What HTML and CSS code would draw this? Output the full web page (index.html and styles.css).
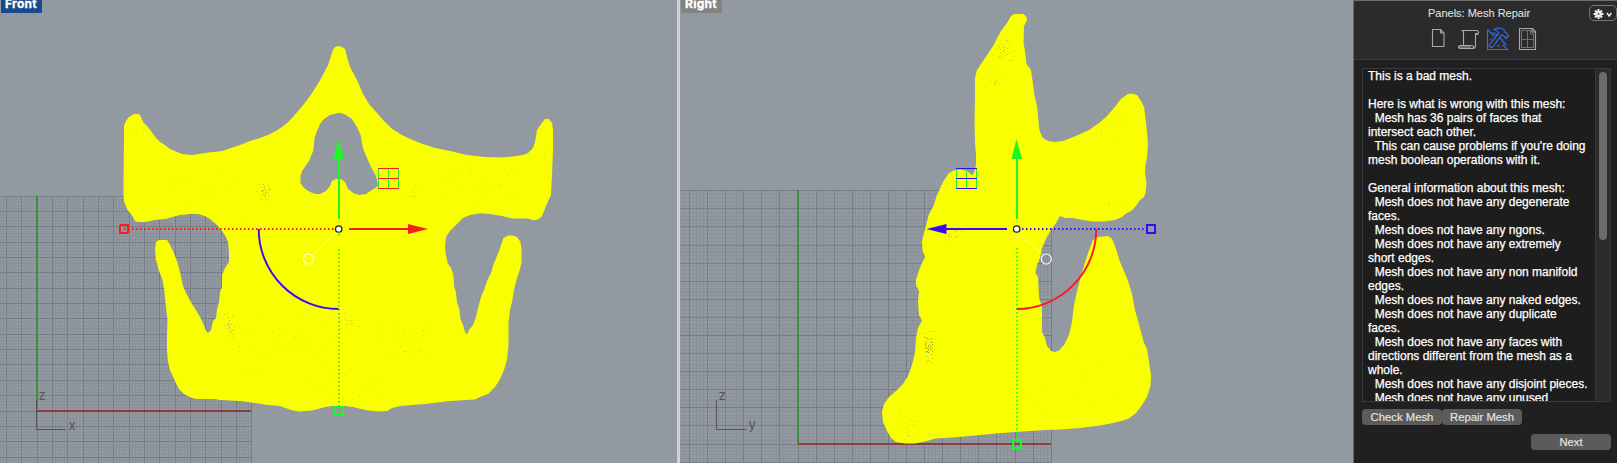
FILE: index.html
```
<!DOCTYPE html>
<html lang="en">
<head>
<meta charset="utf-8">
<title>Mesh Repair</title>
<link rel="stylesheet" href="styles.css">
</head>
<body>
<main class="app">
  <section class="viewport">
    <svg class="scene" viewBox="0 0 677 463">
      <g id="grid-front"></g>
      <path class="mesh" fill-rule="evenodd" d="M338 46L335 47 333 50 331 56 328 65 324 73 319 82 310 96 304 104 298 111 293 117 287 123 282 127 276 131 268 135 260 138 250 141 240 145 231 148 222 151 205 153 192 155 182 154 177 152 170 149 165 145 160 142 156 138 151 131 147 126 143 122 140 115 138 114H134L129 117 126 121 124 126V140L123.500 178V195L124 201 127 209 130 213 133 217 135 221 138 222 145 222 155 220 165 219 180 215 190 214 198 214 205 216 210 219 217 225 222 231 226 237 228 242 229 252V262L225 268 222 275V287L220 292 219 302 217 310 216 318 213 321 211 330 208 333 206 331 203 323 199 315 192 304 186 293 183 286 180 272 177 261 173 251 169 243 167 240H159L156 242 155 250 156 260 159 271 162 278 164 288 166 307 167.500 320 167 335V350L168 362 170 370 174 379 179 389 184 394 188 396 192 398 197 399H215L220 400 240 401 255 403 268 405 280 406 291 410 299 411.500 312 410.500 318 409 325 407 332 406H345L353 407 365 410 378 411.500 387 411 392 408 400 406 425 404 450 401 475 399.500 480 397 488 394 495 387 500 379 504 370 507 360 508.500 345V323L510 310 512 302 514 290 517 278 520 269 521.500 262V250L520.500 242 517 237 513 235.500H508L503.500 238 501 245 499 251 494 263 491 273 487 281 484 290 481 297 478 308 476 317 473 325 469 330 467 334.500 465 332 463 325 460.500 319 459.500 310 457 302 456 293 454 286 454 281 453 274 451 268 447.500 263 446 255 445 247 446 237 450 231 457 224 463 218 470 215 480 213.300 490 214 502 216 512 218.500H528L534 220.500 539 219 542 216 546 206 551 195 552 175 553 150V130L552 123 549 119H545L541 124 537 130 535 142 533 148 528 153 523 155 512 156.500 500 157.500 485 157 467 155 450 151 435 148 420 143 408 138 400 134 391 128 383 120 377 113 369 104 363 94 357 80 350 67 347 57 345 49 342 47ZM338 113L330 115 324 119 320 124 317 131 314.500 138 313.500 150 309 161 302 171 300.500 176V183L303 187 308 191 315 194H320L326 191 330 186 332 181 336 179H341L345 182 348 189 354 193.500 359 195 366 194 372 190 377 187 378 184 376 176 371 167 367 158 364 151 362 144 361 136 357 127 352 119 346 115 341 113Z"/>
      <g class="speckles" id="speckles-front"></g>
      <g class="corner-axes"><path d="M36.500 399.500V429.500H66"/><text x="38.500" y="399.500">z</text><text x="68.500" y="429.500">x</text></g>
      <path class="dots red" d="M124 229H334"/>
      <path class="dots green" d="M339 249V406"/>
      <path class="dots green" d="M339 234V236"/>
      <path class="dots pale" d="M336 232L312 256"/>
      <path class="arc blue" d="M258.700 229A80 80 0 0 0 338.500 309"/>
      <path class="shaft green" d="M339 219V158"/><path class="fill-green" d="M338.500 139l-5 20h10.500z"/>
      <path class="shaft red" d="M348.500 229H409"/><path class="fill-red" d="M428 229l-20-5v10z"/>
      <g class="plane"><path class="green" d="M378.500 168V189M388.500 168V189M398.500 168V189"/><path class="red" d="M378 168.500H399M378 178.500H399M378 188.500H399"/></g>
      <circle class="pivot" cx="338.700" cy="229" r="3.200"/>
      <circle class="rotate-handle" cx="308.500" cy="259" r="5"/>
      <rect class="handle red" x="120" y="225" width="8" height="8" rx="1"/>
      <rect class="handle green" x="335" y="407" width="8" height="8"/>
    </svg>
    <h2 class="viewport-title active">Front</h2>
  </section>
  <section class="viewport">
    <svg class="scene" viewBox="680 0 673 463">
      <g id="grid-right"></g>
      <path class="mesh" d="M1014 14H1023L1026 16 1027 20 1024 26 1023.500 42 1025.500 55 1026.500 64 1031 70 1033 84 1034.500 95 1037.500 109 1039 127 1040 132 1043 138 1048 141 1055 142 1063 141 1071 138 1078 135 1089 130 1099 123 1107 116 1114 108 1121 99 1127 94.500 1131 93.500 1137 95 1141 101 1144 107 1145.500 118 1147 132 1148 145 1147 157 1145.500 165 1145 173 1146.500 183 1145.500 193 1144 197 1140 200 1136 206 1131 211 1126 213.500 1122 217 1115 220 1103 221.500H1093L1080 219.500 1073 218H1065L1060 216 1056 223 1051 230 1047 237 1042 248 1040 258 1037 265 1035.500 273 1038 277 1039 298 1042 306V332L1045 338 1047 346 1051 351 1055 352 1059 350.500 1064 345 1069 335 1072 322 1074 305 1077 291 1082 272 1088 253 1093 240 1097 237 1108 236 1112 239 1115 246 1120 262 1127 278 1132 294 1135 310 1140 328 1144 343 1147 349 1149 362 1151 376 1150.500 386 1147 397 1142 405 1136 413 1128 419 1123 420.500 1113 423 1100 425.500 1080 428 1060 429.500 1045 430 1030 431 1015 432 990 434 970 436 952 437.500 935 438.500 927 441 915 443.500H905L896 442 891 438 887 431 883 422 882 412 884 404 889 397 896 391 903 384 908 376 912 365 915 352 916 338 918 328 922 320.500 919 315 918 302 919 291 916 285V280L919 270 922 263 925 257 922.500 250 922 241 924 233 926 225 929 214 933 207 937 195 943 182 949 173 954 170.500 960 169.500 967 171 972.500 175.500 975 170 976 164V155L975 143 974.500 120 975 101V78L977 70 985 58 993 46 1001 31 1007 23 1011 16Z"/>
      <g class="speckles" id="speckles-right"></g>
      <g class="corner-axes"><path d="M716.500 399.500V429.500H746"/><text x="718.500" y="399.500">z</text><text x="748.500" y="428.500">y</text></g>
      <path class="dots blue" d="M1022 229H1147"/>
      <path class="dots green" d="M1017 248V438"/>
      <path class="dots pale" d="M1018 232L1042 254"/>
      <path class="arc red" d="M1096.300 229A80 80 0 0 1 1016.700 309"/>
      <path class="shaft green" d="M1017 219V158"/><path class="fill-green" d="M1016.500 139l-5 20h10.500z"/>
      <path class="shaft blue" d="M1007 229H946"/><path class="fill-blue" d="M926.500 229l20-5v10z"/>
      <g class="plane"><path class="green" d="M956.500 168V189M966.500 168V189M976.500 168V189"/><path class="blue" d="M956 168.500H977M956 178.500H977M956 188.500H977"/></g>
      <circle class="pivot" cx="1016.700" cy="229" r="3.200"/>
      <circle class="rotate-handle" cx="1046.300" cy="259" r="5"/>
      <rect class="handle blue" x="1147" y="225" width="8" height="8"/>
      <rect class="handle green" x="1013" y="440" width="8" height="8"/>
    </svg>
    <h2 class="viewport-title">Right</h2>
  </section>
  <aside class="panel">
    <header class="panel-head">
      <h1 class="panel-title">Panels: Mesh Repair</h1>
      <button class="gear" aria-label="Panel options">
        <svg width="22" height="12" viewBox="0 0 22 12"><g stroke="#eee" stroke-width="2"><path d="M6.500 1V11M1.500 6H11.500M3 2.500L10 9.500M10 2.500L3 9.500"/></g><circle cx="6.500" cy="6" r="3.200" fill="#eee"/><circle cx="6.500" cy="6" r="1" fill="#555"/><path d="M15 5l2.200 3 2.200-3" fill="none" stroke="#eee" stroke-width="1.500"/></svg>
      </button>
      <nav class="tabs">
        <svg class="tab" viewBox="0 0 24 24"><path d="M2.500 3.500H10.500L14 7V20.500H2.500Z M10.500 3.500V7H14"/></svg>
        <svg class="tab" viewBox="0 0 24 24"><path d="M5.500 19V6.500Q5.500 4.500 3.500 4.500H18.500Q20.500 4.500 20.500 6.500T18.500 8.500V7.500H17.500V19.500Q17.500 22.500 15 22.500H2.500Q.5 22.500 .5 21T2.500 19.500H14Q15.500 19.500 15.500 21T14 22.500M1 21H13"/></svg>
        <svg class="tab selected" viewBox="0 0 24 24"><path d="M1.500 3.500V23.500H21.500L16.500 18.500M1.500 3.500L8.500 10.500M5 12.500V14.500M11 20H14"/><path d="M8 3.500Q12 1.500 15.500 2.500 18.500 3.500 19 6.500L20.500 7 22.500 10 20 12.500 17.500 9.500 15.500 9 7 20.500Q5.500 22 4 21T3.500 18.500L12.500 7.500Q12.500 5 8 3.500ZM14 12L20.500 19.500M6.500 6.500L11 9"/></svg>
        <svg class="tab" viewBox="0 0 24 24"><path d="M5.500 2.500H18.500L21.500 5.500V23.500H5.500Z M18 2.500V6H21.500"/><path class="faint" d="M7.500 4.500H16.500V8H19.500V21.500H7.500ZM13.500 4.500V21.500M7.500 13.500H19.500"/></svg>
      </nav>
    </header>
    <div class="report">
      <pre class="report-text">This is a bad mesh.

Here is what is wrong with this mesh:
  Mesh has 36 pairs of faces that
intersect each other.
  This can cause problems if you're doing
mesh boolean operations with it.

General information about this mesh:
  Mesh does not have any degenerate
faces.
  Mesh does not have any ngons.
  Mesh does not have any extremely
short edges.
  Mesh does not have any non manifold
edges.
  Mesh does not have any naked edges.
  Mesh does not have any duplicate
faces.
  Mesh does not have any faces with
directions different from the mesh as a
whole.
  Mesh does not have any disjoint pieces.
  Mesh does not have any unused</pre>
      <div class="scrollbar"><div class="thumb"></div></div>
    </div>
    <div class="actions"><button class="btn">Check Mesh</button><button class="btn">Repair Mesh</button></div>
    <div class="footer"><button class="btn">Next</button></div>
  </aside>
</main>
<script src="scene.js"></script>
</body>
</html>
```
FILE: styles.css
```
* { box-sizing: border-box; }
body { margin: 0; background: #929aa1; font-family: "Liberation Sans", Arial, sans-serif; }
.app { display: grid; grid-template-columns: 677px 673px 264px; column-gap: 3px; width: 1617px; height: 463px; overflow: hidden; background: #9299a0; }
.app { column-gap: 0; grid-template-columns: 680px 673px 264px; }
.viewport { position: relative; background: #9299a0; overflow: hidden; }
.viewport:first-child { border-right: 3px solid #d2d2d2; }
.scene { display: block; width: 100%; height: 463px; }
.viewport-title { position: absolute; left: 1px; top: -6px; margin: 0; width: 41px; height: 19px; padding-left: 4px; background: #828282; color: #fff; font: 700 12px/20px Inter, sans-serif; letter-spacing: .25px; -webkit-text-stroke: .3px #fff; }
.viewport-title.active { background: #194b8c; }

.minor { stroke: #8a9199; stroke-width: 1; }
.major { stroke: #767d86; stroke-width: 1; }
.axis-h { stroke: #8d3d42; stroke-width: 2; }
.axis-v { stroke: #3e8d40; stroke-width: 2; }
.minor, .major, .axis-h, .axis-v, .plane, .speckles, .handle, .shaft { shape-rendering: crispEdges; }
.mesh { fill: #faff00; }
.speckles { fill: #8a9060; }
.corner-axes { fill: #555; font: 13px Inter, sans-serif; }
.corner-axes path { fill: none; stroke: #555; }
.red { stroke: #f81c1c; }
.green { stroke: #1cf824; }
.blue { stroke: #3908f4; }
.pale { stroke: #ffffb8; }
.fill-red { fill: #f81c1c; }
.fill-green { fill: #1cf824; }
.fill-blue { fill: #3908f4; }
.dots { fill: none; stroke-width: 1.8; stroke-dasharray: 1.500 2.500; }
.dots.pale { stroke-width: 1.2; }
.arc, .shaft { fill: none; stroke-width: 1.9; }
.shaft { stroke-width: 2; }
.plane { stroke-width: 1; }
.pivot { fill: #fff; stroke: #202020; stroke-width: 1.3; }
.rotate-handle { fill: none; stroke: #fff; stroke-width: 1.1; }
.handle { fill: none; stroke-width: 2; }

.panel { display: flex; flex-direction: column; width: 264px; height: 463px; background: #202022; border-left: 1px solid #68696b; }
.panel-head { position: relative; height: 60px; background: #2b2b2b; border-top: 1px solid #6d6e70; border-bottom: 1px solid #3b3b3c; }
.panel-title { margin: 0; padding-top: 5px; padding-right: 13px; text-align: center; color: #dedede; font-size: 11px; line-height: 15px; font-weight: 400; letter-spacing: 0; -webkit-text-stroke: .15px #dedede; }
.gear { position: absolute; right: 0; top: 4px; width: 28px; height: 16px; padding: 1px 0 0 2px; background: #2b2b2b; border: 1px solid #777; border-radius: 5px; }
.gear svg { display: block; }
.tabs { display: flex; gap: 4px; padding: 5px 0 0 76px; }
.tab { width: 24px; height: 24px; fill: none; stroke: #a8a8a8; stroke-width: 1.1; }
.tab.selected { stroke: #3568e0; stroke-width: 1.2; }
.tab .faint { stroke: #707070; }
.report { display: flex; height: 334px; margin: 8px 6px 0 8px; border: 1px solid #3a3a3c; background: #1d1d1d; overflow: hidden; }
.report-text { flex: 1; margin: 0; overflow: hidden; padding-left: 5px; color: #fff; font: 12px/14px "Liberation Sans", Arial, sans-serif; -webkit-text-stroke: .25px #fff; }
.scrollbar { width: 15px; padding: 3px 3px 0; background: #2b2b2d; border-left: 1px solid #39393b; }
.thumb { width: 8px; height: 168px; border-radius: 4px; background: #6b6b6d; }
.actions { display: flex; margin: 7px 0 0 8px; }
.btn { width: 80px; height: 16px; padding: 0; border: 0; border-radius: 4px; background: #5b5b5b; color: #e6e6e6; font: 11.300px/14px "Liberation Sans", Arial, sans-serif; -webkit-text-stroke: .15px #e6e6e6; }
.btn { padding-bottom: 1px; }
.footer { display: flex; justify-content: flex-end; margin: 9px 6px 0 0; }
```
FILE: scene.js
```
const NS = "http://www.w3.org/2000/svg";

function add(parent, tag, attrs) {
  const el = document.createElementNS(NS, tag);
  for (const key in attrs) el.setAttribute(key, attrs[key]);
  parent.appendChild(el);
}

// Construction grid: majors every `step`, five minors per major, 14 cells from the origin.
function drawGrid(id, left, ox, oy, step) {
  const g = document.getElementById(id);
  const right = Math.floor(ox + 14 * step);
  const top = Math.floor(oy - 14 * step);
  for (const kind of ["minor", "major"]) {
    for (let i = -100; i <= 70; i++) {
      if ((i % 5 === 0) !== (kind === "major")) continue;
      const x = Math.floor(ox + i * step / 5) + 0.5;
      const y = Math.floor(oy + i * step / 5) + 0.5;
      if (x >= left) add(g, "path", { class: kind, d: `M${x} ${top}V463` });
      if (y >= top && y < 463) add(g, "path", { class: kind, d: `M${left} ${y}H${right + 1}` });
    }
  }
  add(g, "path", { class: "axis-h", d: `M${ox} ${Math.round(oy)}H${right}` });
  add(g, "path", { class: "axis-v", d: `M${Math.round(ox)} ${top}V${Math.round(oy)}` });
}

let seed = 7;
function random() {
  seed = (seed * 16807) % 2147483647;
  return seed / 2147483647;
}

// Each cluster: centre x, centre y, spread x, spread y, count, opacity.
function drawSpeckles(id, clusters) {
  const g = document.getElementById(id);
  for (const [cx, cy, sx, sy, n, opacity] of clusters) {
    for (let i = 0; i < n; i++) {
      const x = Math.round(cx + (random() + random() - 1) * sx);
      const y = Math.round(cy + (random() + random() - 1) * sy);
      add(g, "rect", { x, y, width: 1, height: 1, opacity });
    }
  }
}

drawGrid("grid-front", 0, 37, 411, 15.34);
drawGrid("grid-right", 680, 798, 444, 18.09);
drawSpeckles("speckles-front", [
  [263, 193, 8, 12, 28, .5], [200, 185, 60, 35, 14, .3], [138, 132, 10, 8, 4, .35],
  [229, 326, 6, 13, 24, .55], [300, 335, 50, 35, 26, .3], [350, 322, 12, 12, 18, .35],
  [405, 340, 35, 22, 30, .3], [250, 350, 20, 30, 12, .3], [350, 385, 50, 20, 22, .3],
  [411, 191, 9, 8, 12, .35], [485, 185, 50, 25, 22, .3], [546, 165, 5, 20, 5, .3]
]);
drawSpeckles("speckles-right", [
  [1004, 49, 14, 14, 42, .4], [994, 76, 8, 12, 12, .4], [928, 346, 7, 17, 54, .6],
  [907, 425, 14, 14, 22, .3], [956, 234, 14, 6, 20, .4], [1112, 120, 18, 18, 14, .35],
  [1137, 340, 6, 22, 9, .3], [1070, 380, 90, 40, 12, .3], [1110, 205, 18, 12, 6, .3]
]);
```
